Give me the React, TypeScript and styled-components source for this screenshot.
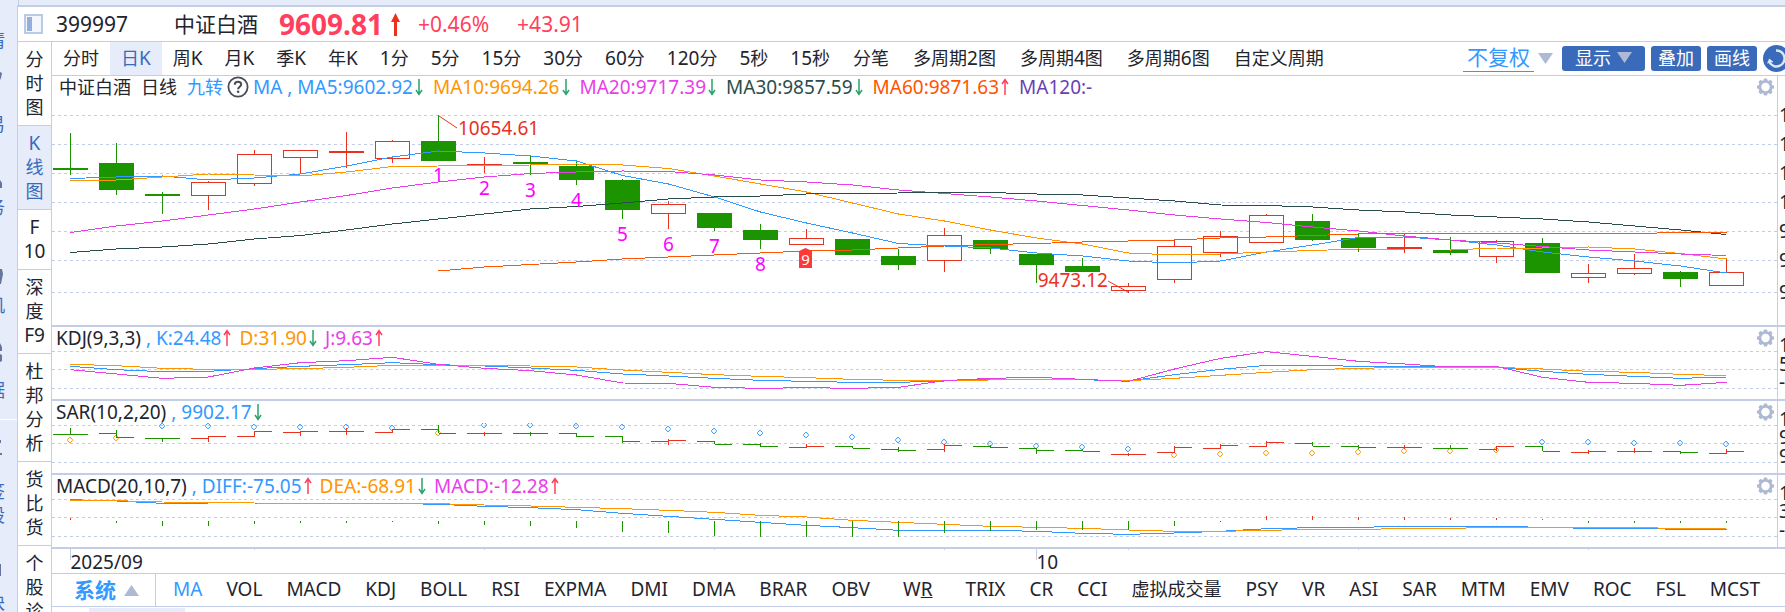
import React, { useState } from "react";
import styled, { createGlobalStyle } from "styled-components";

const c = {
  line: "#c3cde6",
  pale: "#e6ecfa",
  ink: "#22242e",
  navy: "#3a6bbb",
  blue: "#3399ff",
  orange: "#ff9500",
  magenta: "#e83ee8",
  slate: "#2a4d4d",
  vermilion: "#ff5500",
  violet: "#6a3fb0",
  red: "#e8321e",
  rose: "#ff3f5c",
  green: "#1c9400",
  fall: "#2aa36b",
  muted: "#aeb9d4",
};

const Global = createGlobalStyle`
  * { box-sizing: border-box; }
  html, body, #root { height: 100%; }
  body {
    margin: 0;
    overflow: hidden;
    background: ${c.pale};
    color: ${c.ink};
    font-family: "Noto Sans", "Noto Sans CJK SC", sans-serif;
    font-size: 19px;
  }
  button, select {
    margin: 0;
    padding: 0;
    border: 0;
    background: none;
    color: inherit;
    font: inherit;
    cursor: pointer;
  }
  svg { display: block; }
`;

/* ---------- page frame ---------- */

const Page = styled.div`
  display: flex;
  height: 100%;
`;

const Rail = styled.nav`
  flex: none;
  width: 17px;
  padding-top: 28px;
  overflow: hidden;
  color: ${c.navy};
`;

const RailItem = styled.div<{ $divided?: boolean }>`
  display: flex;
  flex-direction: column;
  align-items: flex-end;
  padding-right: 12px;
  background: ${(p) =>
    p.$divided ? "linear-gradient(#fff, #fff) 0 17px / 17px 1px no-repeat" : "none"};
`;

const RailLabel = styled.span`
  font-size: 18px;
  line-height: 24px;
  white-space: nowrap;
`;

const Shell = styled.div`
  flex: 1;
  min-width: 0;
  display: flex;
  flex-direction: column;
`;

const TopStrip = styled.div`
  flex: none;
  height: 5px;
  margin-left: 1px;
  border-left: 1px solid ${c.line};
`;

const Window = styled.main`
  flex: 1;
  min-height: 0;
  display: flex;
  flex-direction: column;
  background: #fff;
  border-top: 2px solid ${c.line};
  border-left: 1px solid ${c.line};
`;

const Quote = styled.header`
  flex: none;
  display: flex;
  align-items: center;
  height: 35px;
  padding-left: 6px;
  border-bottom: 1px solid ${c.line};
  font-size: 21px;
  line-height: 34px;
  white-space: nowrap;
`;

const Code = styled.span`
  width: 118px;
  margin-left: 13px;
`;

const Price = styled.strong`
  margin: 0 8px 0 21px;
  color: ${c.rose};
  font-size: 28px;
`;

const Change = styled.span`
  margin-left: 18px;
  color: ${c.rose};
  & + & { margin-left: 28px; }
`;

const Columns = styled.div`
  flex: 1;
  min-height: 0;
  display: flex;
`;

const Side = styled.nav`
  flex: none;
  width: 34px;
  overflow: hidden;
  border-right: 1px solid ${c.line};
`;

const SideTab = styled.button<{ $on?: boolean }>`
  display: flex;
  flex-direction: column;
  align-items: center;
  width: 100%;
  padding: 5px 0 6px;
  border-bottom: 1px solid ${c.line};
  background: ${(p) => (p.$on ? c.pale : "#fff")};
  color: ${(p) => (p.$on ? c.navy : c.ink)};
  line-height: 24px;
`;

const Content = styled.div`
  flex: 1;
  min-width: 0;
  display: flex;
  flex-direction: column;
`;

/* ---------- period toolbar ---------- */

const Toolbar = styled.div`
  flex: none;
  display: flex;
  align-items: center;
  height: 34px;
  border-bottom: 1px solid ${c.line};
  overflow: hidden;
`;

const Periods = styled.div`
  flex: 1;
  min-width: 0;
  display: flex;
  align-self: stretch;
  overflow: hidden;
`;

const Period = styled.button<{ $on?: boolean; $wide?: boolean }>`
  flex: none;
  padding: 0 ${(p) => (p.$wide ? 12 : 11)}px 2px;
  background: ${(p) => (p.$on ? c.pale : "none")};
  color: ${(p) => (p.$on ? c.navy : c.ink)};
  line-height: 30px;
  white-space: nowrap;
`;

const Actions = styled.div`
  flex: none;
  display: flex;
  align-items: center;
  gap: 6px;
  margin-right: -5px;
`;

const Adjust = styled.label`
  display: flex;
  align-items: center;
  gap: 4px;
  margin-right: 3px;
`;

const AdjustSelect = styled.select`
  width: 71px;
  height: 26px;
  padding: 0 4px 2px;
  appearance: none;
  border-bottom: 1px solid ${c.blue};
  color: ${c.blue};
  font-size: 21px;
  line-height: 22px;
`;

const Action = styled.button`
  display: flex;
  align-items: center;
  justify-content: center;
  gap: 6px;
  height: 25px;
  padding: 0 7px 2px;
  border-radius: 3px;
  background: ${c.navy};
  color: #fff;
  font-size: 18px;
  line-height: 22px;
`;

const MenuAction = styled(Action)`
  padding: 0 13px 2px;
`;

const RoundAction = styled(Action)`
  width: 27px;
  height: 27px;
  padding: 0;
  border-radius: 50%;
`;

/* ---------- chart panels ---------- */

const Panel = styled.section`
  flex: none;
  display: flex;
  border-bottom: 2px solid ${c.line};
`;

const Plot = styled.div`
  flex: 1;
  min-width: 0;
`;

const Head = styled.div<{ $indent?: boolean }>`
  display: flex;
  align-items: center;
  height: 22px;
  padding: 0 3px 0 ${(p) => (p.$indent ? 7 : 4)}px;
  line-height: 22px;
  white-space: nowrap;
`;

const Legend = styled.div<{ $tight?: boolean }>`
  flex: 1;
  min-width: 0;
  display: flex;
  gap: ${(p) => (p.$tight ? 8 : 10)}px;
  overflow: hidden;
`;

const Title = styled.span`
  display: flex;
  align-items: center;
  gap: 4px;
`;

const Reading = styled.span<{ $tone: string }>`
  display: flex;
  align-items: center;
  gap: 2px;
  color: ${(p) => p.$tone};
  white-space: pre;
`;

const Lead = styled.span`
  color: ${c.ink};
`;

const Gear = styled.button`
  flex: none;
  width: 17px;
  height: 18px;
`;

const Help = styled.button`
  color: ${c.ink};
`;

const Axis = styled.div`
  flex: none;
  width: 8px;
  overflow: hidden;
  border-left: 1px solid ${c.line};
`;

const Timeline = styled.div`
  flex: none;
  height: 25px;
  border-bottom: 1px solid ${c.line};
`;

/* ---------- indicator bar ---------- */

const IndicatorBar = styled.div`
  flex: none;
  display: flex;
  height: 33px;
  border-bottom: 1px solid ${c.line};
  overflow: hidden;
`;

const System = styled.button`
  flex: none;
  display: flex;
  align-items: center;
  gap: 8px;
  width: 104px;
  padding-left: 22px;
  border-right: 1px solid ${c.line};
  color: ${c.blue};
  font-size: 21px;
  font-weight: 700;
  line-height: 30px;
`;

const Indicators = styled.div`
  display: flex;
  gap: 24px;
  padding-left: 17px;
`;

const Indicator = styled.button<{ $on?: boolean; $roomy?: boolean }>`
  flex: none;
  padding: 0 ${(p) => (p.$roomy ? 9 : 0)}px 2px;
  color: ${(p) => (p.$on ? c.blue : c.ink)};
  line-height: 30px;
`;

const Footer = styled.div`
  flex: 1;
  padding: 1px 0 0 37px;
`;

const FooterTab = styled.div`
  width: 96px;
  height: 100%;
  background: ${c.pale};
`;

const HanRun = styled.span`
  font-size: 18px;
`;

/** Sets Chinese characters one size below the Latin text around them. */
const Mixed = ({ text }: { text: string }) => (
  <>
    {text
      .split(/([\u4e00-\u9fff]+)/)
      .filter(Boolean)
      .map((part, i) => (/[\u4e00-\u9fff]/.test(part) ? <HanRun key={i}>{part}</HanRun> : part))}
  </>
);

/* ---------- icons ---------- */

const Triangle = ({ up }: { up?: boolean }) => (
  <svg width="15" height="11" viewBox="0 0 15 11" aria-hidden="true">
    <path d={up ? "M0 11L7.5 0L15 11Z" : "M0 0L7.5 11L15 0Z"} fill={c.muted} />
  </svg>
);

const Trend = ({ up }: { up?: boolean }) => (
  <svg width="8" height="18" viewBox="0 0 8 18" aria-hidden="true">
    <path
      d={up ? "M4 17V2M1 6L4 1.5L7 6" : "M4 1V16M1 12L4 16.5L7 12"}
      fill="none"
      stroke={up ? c.rose : c.fall}
      strokeWidth="1.5"
    />
  </svg>
);

const PanelIcon = () => (
  <svg width="19" height="20" viewBox="0 0 19 20" aria-hidden="true">
    <rect x="1" y="1" width="17" height="18" fill="#f3f6fc" stroke="#a3bbdf" strokeWidth="1.5" />
    <rect x="3" y="3" width="5" height="14" fill="#94aed8" />
  </svg>
);

const PriceArrow = () => (
  <svg width="9" height="23" viewBox="0 0 9 23" aria-hidden="true">
    <path d="M4.5 0L9 9H6V23H3V9H0Z" fill={c.red} />
  </svg>
);

const GearIcon = () => (
  <svg width="17" height="18" viewBox="-8.5 -9 17 18" aria-hidden="true">
    <circle r="5.6" fill="none" stroke={c.muted} strokeWidth="2.8" />
    {[0, 45, 90, 135, 180, 225, 270, 315].map((a) => (
      <rect key={a} x="-1.8" y="-8.6" width="3.6" height="3" rx="1" fill={c.muted} transform={`rotate(${a})`} />
    ))}
  </svg>
);

const HelpIcon = () => (
  <svg width="22" height="22" viewBox="0 0 22 22" aria-hidden="true">
    <circle cx="11" cy="11" r="9.6" fill="none" stroke="#4a4d58" strokeWidth="1.8" />
    <path
      d="M7.8 8.8C7.8 6.8 9.2 5.8 11 5.8C12.9 5.8 14.2 6.9 14.2 8.5C14.2 10.6 11.1 10.8 11.1 13.2"
      fill="none"
      stroke="#4a4d58"
      strokeWidth="2"
    />
    <circle cx="11.1" cy="15.8" r="1.3" fill="#4a4d58" />
  </svg>
);

const RefreshIcon = () => (
  <svg width="27" height="27" viewBox="0 0 27 27" aria-hidden="true">
    <path d="M13 5.5A8 8 0 1 1 6.6 17.5" fill="none" stroke="#dfe7f6" strokeWidth="2.4" />
    <path d="M4 18.5L6.2 13.5L10.5 17Z" fill="#dfe7f6" />
  </svg>
);

/* ---------- price data ---------- */

const STEP = 46;
const cx = (i: number) => 18.5 + STEP * i;

type Candle = [up: 0 | 1, high: number, top: number, bottom: number, low: number];

const candles: Candle[] = [
  [0, 133, 168, 170, 175], [0, 143, 163, 190, 195], [0, 192, 194, 196, 214], [1, 181, 182, 196, 210],
  [1, 150, 154, 184, 186], [1, 150, 150, 158, 174], [1, 132, 151, 153, 168], [1, 140, 141, 159, 163],
  [0, 115, 141, 161, 161], [1, 157, 164, 165, 173], [0, 156, 162, 164, 175], [0, 162, 166, 180, 185],
  [0, 179, 180, 210, 219], [1, 201, 204, 214, 229], [0, 213, 213, 228, 231], [0, 224, 230, 240, 249],
  [1, 229, 238, 245, 245], [0, 239, 239, 255, 255], [0, 249, 256, 265, 270], [1, 228, 235, 261, 272],
  [0, 240, 240, 249, 254], [0, 254, 254, 265, 283], [0, 258, 266, 272, 272], [1, 283, 286, 291, 293],
  [1, 240, 246, 280, 283], [1, 231, 236, 253, 257], [1, 214, 215, 243, 243], [0, 214, 221, 240, 241],
  [0, 233, 238, 248, 252], [1, 234, 247, 249, 253], [0, 237, 250, 253, 255], [1, 240, 241, 257, 263],
  [0, 238, 243, 273, 273], [1, 264, 273, 278, 283], [1, 254, 268, 274, 275], [0, 271, 272, 279, 287],
  [1, 258, 272, 286, 286],
];

const averages: { tone: string; from: number; ys: number[] }[] = [
  { tone: c.blue, from: 0, ys: [178.5, 177, 176, 180, 178, 174, 166, 157, 151, 153, 156, 161, 175.5, 184, 197, 212, 223, 233, 243.5, 246, 248, 253, 256, 261, 263, 261, 252, 245, 237.5, 237, 240, 245, 252, 257, 261, 266, 273] },
  { tone: c.orange, from: 0, ys: [181, 180, 177, 174, 175, 176, 172, 166.5, 166, 165.5, 165, 164, 165, 168.5, 176, 184, 192, 203, 214, 221, 230, 238, 244, 253, 255, 254, 252, 250.5, 249, 250, 250, 248, 248, 247, 249, 253.5, 259] },
  { tone: c.magenta, from: 0, ys: [232.5, 226, 221, 215, 209, 202, 195.5, 188, 182, 177, 173.5, 172, 171, 171.5, 175, 180, 182, 185, 190, 193.5, 197, 201, 205.5, 210, 215, 219, 222.5, 227, 231, 236, 240, 243, 246.5, 250, 252, 254, 255.5] },
  { tone: c.slate, from: 0, ys: [252.5, 249, 247, 244, 239, 235.5, 230, 224, 219, 214, 209, 206.5, 203, 199, 197, 196, 194, 193.5, 193, 192.5, 192.5, 194, 195, 198, 201, 205, 205.5, 207, 210, 212, 215, 217, 219, 222, 226, 230, 234.5] },
  { tone: c.vermilion, from: 8, ys: [271, 267, 264.5, 262, 259, 257, 255, 253, 251, 250, 248, 246, 244.5, 243.5, 242, 241, 240, 238, 237, 235.5, 234, 233.5, 233.5, 233.5, 233.5, 233.5, 233.5, 232.5, 232.5] },
];

const nineTurns = [182, 195, 197, 207, 241, 251, 253, 271];

const PRICE_TOP = 98;
const priceY = (v: number) => v - PRICE_TOP;

/* Lower panels are plotted at three units to the pixel. */
const unit = (base: number) => (v: number) => v / 3 - base;

const kdj = {
  k: [139, 149, 155, 154, 146, 139, 134, 128, 134, 138, 144, 151, 162, 168, 175, 181, 184, 187, 187, 183, 178, 177, 179, 183, 164, 148, 136, 136, 139, 139, 141, 142, 154, 163, 169, 175, 171],
  d: [133, 137, 145, 148, 148, 146, 142, 136, 136, 137, 138, 141, 150, 157, 164, 169, 173, 178, 181, 181, 180, 179, 179, 182, 175, 166, 157, 149, 145, 142, 142, 142, 147, 154, 157, 163, 167],
  j: [149, 162, 175, 171, 144, 128, 122, 112, 133, 145, 152, 165, 189, 190, 202, 205, 203, 205, 202, 182, 175, 172, 178, 184, 147, 115, 95, 109, 124, 132, 141, 139, 172, 187, 190, 196, 187],
};

type Bar = [up: 0 | 1, high: number, low: number, open: number, close: number, sar: number, below: 0 | 1];

const sar: Bar[] = [
  [0, 324, 345, 343, 343, 360, 1], [0, 330, 353, 340, 352, 354, 1], [0, 355, 365, 355, 355, 318, 0],
  [1, 348, 365, 355, 349, 318, 0], [1, 333, 352, 349, 334, 321, 0], [1, 333, 347, 337, 334, 321, 0],
  [1, 325, 344, 334, 334, 321, 0], [1, 327, 340, 337, 328, 324, 0], [0, 315, 340, 328, 340, 339, 1],
  [1, 336, 347, 340, 340, 315, 0], [0, 336, 347, 340, 340, 315, 0], [0, 340, 352, 340, 349, 318, 0],
  [0, 349, 368, 349, 364, 321, 0], [1, 357, 374, 364, 361, 327, 0], [0, 364, 373, 364, 373, 333, 0],
  [0, 370, 382, 373, 379, 339, 0], [1, 373, 382, 382, 379, 345, 0], [0, 379, 385, 379, 385, 351, 0],
  [0, 382, 396, 388, 391, 360, 0], [1, 373, 395, 388, 376, 366, 0], [0, 376, 385, 379, 382, 371, 0],
  [0, 385, 402, 385, 391, 378, 0], [0, 388, 394, 391, 394, 381, 0], [1, 399, 408, 403, 403, 387, 0],
  [1, 379, 399, 397, 382, 405, 1], [1, 372, 388, 385, 376, 402, 1], [1, 363, 379, 379, 367, 399, 1],
  [0, 367, 379, 370, 379, 399, 1], [0, 375, 388, 379, 382, 396, 1], [1, 375, 388, 382, 382, 393, 1],
  [0, 376, 387, 385, 385, 393, 1], [1, 378, 392, 388, 379, 390, 1], [0, 379, 394, 379, 394, 366, 0],
  [1, 391, 402, 397, 394, 366, 0], [1, 385, 399, 394, 394, 369, 0], [0, 394, 403, 394, 397, 369, 0],
  [1, 388, 400, 400, 394, 372, 0],
];

const macd = {
  diff: [539, 543, 550, 552, 552, 550, 550, 550, 553, 559, 563, 569, 580, 589, 598, 607, 616, 623, 631, 631, 631, 634, 640, 643, 639, 634, 626, 623, 622, 619, 619, 619, 622, 625, 625, 628, 628],
  dea: [541, 542, 546, 548, 549, 550, 550, 550, 551, 555, 558, 562, 566, 571, 577, 586, 591, 601, 607, 613, 619, 622, 625, 630, 634, 634, 631, 628, 628, 626, 625, 622, 622, 622, 623, 625, 626],
  bars: [595, 609, 618, 617, 612, 609, 608, 606, 612, 615, 617, 624, 636, 639, 648, 651, 651, 651, 651, 639, 633, 630, 630, 630, 618, 606, 588, 588, 591, 592, 594, 595, 597, 609, 609, 609, 609],
};

/* ---------- drawing parts ---------- */

const Grid = ({ ys }: { ys: number[] }) => (
  <g stroke={c.line} strokeDasharray="3 3" shapeRendering="crispEdges">
    {ys.map((y) => (
      <line key={y} x1="0" x2="100%" y1={y + 0.5} y2={y + 0.5} />
    ))}
  </g>
);

const Series = ({ ys, tone, from = 0 }: { ys: number[]; tone: string; from?: number }) => (
  <polyline
    points={ys.map((y, i) => `${cx(i + from)},${y}`).join(" ")}
    fill="none"
    stroke={tone}
    shapeRendering="crispEdges"
  />
);

const CandleMark = ({ x, data }: { x: number; data: Candle }) => {
  const [up, high, top, bottom, low] = data;
  const tone = up ? c.red : c.green;
  const hollow = up && bottom - top > 2;
  return (
    <g stroke={tone} shapeRendering="crispEdges">
      {high < top && <line x1={x} x2={x} y1={priceY(high)} y2={priceY(top)} />}
      {low > bottom && <line x1={x} x2={x} y1={priceY(bottom)} y2={priceY(low)} />}
      {hollow ? (
        <rect x={x - 17} y={priceY(top) + 0.5} width="34" height={bottom - top - 1} fill="#fff" />
      ) : (
        <rect x={x - 17.5} y={priceY(top)} width="35" height={bottom - top} fill={tone} stroke="none" />
      )}
    </g>
  );
};

const AxisLabels = ({ height, marks }: { height: number; marks: [string, number][] }) => (
  <svg width="14" height={height} fill={c.ink} fontSize="19">
    {marks.map(([t, y]) => (
      <text key={y} x="1" y={y}>
        {t}
      </text>
    ))}
  </svg>
);

const PriceChart = () => (
  <svg width="100%" height="227" role="img" aria-label="中证白酒 日线">
    <Grid ys={[17, 46, 75, 104, 133, 162, 194]} />
    {candles.map((d, i) => (
      <CandleMark key={i} x={cx(i)} data={d} />
    ))}
    {averages.map((a) => (
      <Series key={a.tone} tone={a.tone} from={a.from} ys={a.ys.map(priceY)} />
    ))}
    <g stroke={c.red}>
      <line x1="387" y1="18" x2="405" y2="30" />
      <line x1="1056" y1="183" x2="1076" y2="194" />
    </g>
    <g fill={c.red} fontSize="19">
      <text x="406" y="37">10654.61</text>
      <text x="1056" y="189" textAnchor="end">9473.12</text>
    </g>
    <g fill="#ff00ff" fontSize="19" textAnchor="middle">
      {nineTurns.map((y, i) => (
        <text key={i} x={cx(8 + i)} y={priceY(y)}>
          {i + 1}
        </text>
      ))}
    </g>
    <path d="M747 170V153L753.5 150L760 153V170Z" fill="#ff3838" />
    <text x="753.5" y="167" fill="#fff" fontSize="15" textAnchor="middle">
      9
    </text>
  </svg>
);

const kdjY = unit(29);
const sarY = unit(103);
const macdY = unit(177);

const KdjChart = () => (
  <svg width="100%" height="50" role="img" aria-label="KDJ">
    <Grid ys={[2, 20, 39]} />
    <Series tone={c.blue} ys={kdj.k.map(kdjY)} />
    <Series tone={c.orange} ys={kdj.d.map(kdjY)} />
    <Series tone={c.magenta} ys={kdj.j.map(kdjY)} />
  </svg>
);

const SarChart = () => (
  <svg width="100%" height="50" role="img" aria-label="SAR">
    <Grid ys={[2, 20, 39]} />
    {sar.map(([up, high, low, open, close, dot, below], i) => {
      const x = cx(i);
      return (
        <g key={i} fill="none">
          <path
            d={`M${x - 0.5} ${sarY(dot) - 2.8}l2.4 2.2v1.2l-2.4 2.2l-2.4 -2.2v-1.2Z`}
            stroke={below ? c.orange : c.blue}
          />
          <path
            d={`M${x} ${sarY(high)}V${sarY(low)}M${x - 17.5} ${sarY(open)}H${x}M${x} ${sarY(close)}H${x + 17.5}`}
            stroke={up ? c.red : c.green}
            shapeRendering="crispEdges"
          />
        </g>
      );
    })}
  </svg>
);

const MacdChart = () => (
  <svg width="100%" height="50" role="img" aria-label="MACD">
    <Grid ys={[2, 20, 39]} />
    <Series tone={c.blue} ys={macd.diff.map(macdY)} />
    <Series tone={c.orange} ys={macd.dea.map(macdY)} />
    <g shapeRendering="crispEdges">
      {macd.bars.map((v, i) => {
        const up = v < 601;
        return (
          <line
            key={i}
            x1={cx(i)}
            x2={cx(i)}
            y1={up ? macdY(v) : 24}
            y2={up ? 23 : macdY(v)}
            stroke={up ? c.red : c.green}
          />
        );
      })}
    </g>
  </svg>
);

const SettingsButton = ({ name }: { name: string }) => (
  <Gear type="button" aria-label={`${name} 设置`}>
    <GearIcon />
  </Gear>
);

type ReadingData = { text: string; tone: string; up?: boolean; flat?: boolean };

const Readings = ({ items, lead }: { items: ReadingData[]; lead?: string }) => (
  <>
    {items.map((r, i) => (
      <Reading key={r.text} $tone={r.tone}>
        <span>
          {i === 0 && lead && (
            <>
              <Lead>{lead}</Lead>
              {" , "}
            </>
          )}
          {r.text}
        </span>
        {!r.flat && <Trend up={r.up} />}
      </Reading>
    ))}
  </>
);

const maReadings: ReadingData[] = [
  { text: "MA , MA5:9602.92", tone: c.blue },
  { text: "MA10:9694.26", tone: c.orange },
  { text: "MA20:9717.39", tone: c.magenta },
  { text: "MA30:9857.59", tone: c.slate },
  { text: "MA60:9871.63", tone: c.vermilion, up: true },
  { text: "MA120:-", tone: c.violet, flat: true },
];

const lowerPanels: {
  lead: string;
  readings: ReadingData[];
  chart: () => React.ReactElement;
  marks: [string, number][];
}[] = [
  {
    lead: "KDJ(9,3,3)",
    readings: [
      { text: "K:24.48", tone: c.blue, up: true },
      { text: "D:31.90", tone: c.orange },
      { text: "J:9.63", tone: c.magenta, up: true },
    ],
    chart: KdjChart,
    marks: [["1", 25], ["5", 44], ["-", 62]],
  },
  {
    lead: "SAR(10,2,20)",
    readings: [{ text: "9902.17", tone: c.blue }],
    chart: SarChart,
    marks: [["1", 25], ["9", 43], ["9", 62]],
  },
  {
    lead: "MACD(20,10,7)",
    readings: [
      { text: "DIFF:-75.05", tone: c.blue, up: true },
      { text: "DEA:-68.91", tone: c.orange },
      { text: "MACD:-12.28", tone: c.magenta, up: true },
    ],
    chart: MacdChart,
    marks: [["1", 25], ["3", 43], ["-", 62]],
  },
];

const sideTabs = [["分", "时", "图"], ["K", "线", "图"], ["F", "10"], ["深", "度", "F9"], ["杜", "邦", "分", "析"], ["货", "比", "货"], ["个", "股", "诊"]];

const periods = ["分时", "日K", "周K", "月K", "季K", "年K", "1分", "5分", "15分", "30分", "60分", "120分", "5秒", "15秒", "分笔", "多周期2图", "多周期4图", "多周期6图", "自定义周期"];

const indicators = ["MA", "VOL", "MACD", "KDJ", "BOLL", "RSI", "EXPMA", "DMI", "DMA", "BRAR", "OBV", "WR", "TRIX", "CR", "CCI", "虚拟成交量", "PSY", "VR", "ASI", "SAR", "MTM", "EMV", "ROC", "FSL", "MCST"];

const railItems: { icon: number; shape: string; labels: string[]; divided?: boolean }[] = [
  { icon: 0, shape: "", labels: ["情"] },
  { icon: 60, shape: "M0 20L2 21L1 26L0 28Z", labels: ["易"] },
  { icon: 59, shape: "M0 44L2 47V52H0Z", labels: ["务"] },
  { icon: 74, shape: "M0 50H2L3 55L1 65H0Z", labels: ["机"] },
  { icon: 61, shape: "M0 26L2 30V34H0ZM0 37L2 38V44L0 45Z", labels: ["据"] },
  { icon: 77, shape: "M0 38H1V41H0ZM0 51H2V53H0Z", labels: ["签", "股"], divided: true },
  { icon: 63, shape: "M0 37H1V49H0Z", labels: ["块"] },
];

export default function App() {
  const [period, setPeriod] = useState("日K");
  const [indicator, setIndicator] = useState("MA");
  const [side, setSide] = useState(1);

  return (
    <>
      <Global />
      <Page>
        <Rail>
          {railItems.map((item) => (
            <RailItem key={item.labels[0]} $divided={item.divided}>
              {item.icon > 0 && (
                <svg width="5" height={item.icon} aria-hidden="true">
                  <path d={item.shape} fill="#66759b" />
                </svg>
              )}
              {item.labels.map((l) => (
                <RailLabel key={l}>{l}</RailLabel>
              ))}
            </RailItem>
          ))}
        </Rail>
        <Shell>
          <TopStrip />
          <Window>
            <Quote>
              <PanelIcon />
              <Code>399997</Code>
              <span>中证白酒</span>
              <Price>9609.81</Price>
              <PriceArrow />
              <Change>+0.46%</Change>
              <Change>+43.91</Change>
            </Quote>
            <Columns>
              <Side>
                {sideTabs.map((chars, i) => (
                  <SideTab key={i} type="button" $on={i === side} onClick={() => setSide(i)}>
                    {chars.map((ch, j) => (
                      <span key={j}>
                        <Mixed text={ch} />
                      </span>
                    ))}
                  </SideTab>
                ))}
              </Side>
              <Content>
                <Toolbar>
                  <Periods>
                    {periods.map((p, i) => (
                      <Period key={p} type="button" $on={p === period} $wide={i > 13} onClick={() => setPeriod(p)}>
                        <Mixed text={p} />
                      </Period>
                    ))}
                  </Periods>
                  <Actions>
                    <Adjust>
                      <AdjustSelect aria-label="复权" defaultValue="不复权">
                        <option>不复权</option>
                      </AdjustSelect>
                      <Triangle />
                    </Adjust>
                    <MenuAction type="button">
                      显示
                      <Triangle />
                    </MenuAction>
                    <Action type="button">叠加</Action>
                    <Action type="button">画线</Action>
                    <RoundAction type="button" aria-label="刷新">
                      <RefreshIcon />
                    </RoundAction>
                  </Actions>
                </Toolbar>

                <Panel>
                  <Plot>
                    <Head $indent>
                      <Legend>
                        <HanRun>中证白酒</HanRun>
                        <HanRun>日线</HanRun>
                        <Title>
                          <Reading $tone={c.blue}>
                            <HanRun>九转</HanRun>
                          </Reading>
                          <Help type="button" aria-label="帮助">
                            <HelpIcon />
                          </Help>
                          <Readings items={maReadings.slice(0, 1)} />
                        </Title>
                        <Readings items={maReadings.slice(1)} />
                      </Legend>
                      <SettingsButton name="MA" />
                    </Head>
                    <PriceChart />
                  </Plot>
                  <Axis>
                    <AxisLabels
                      height={249}
                      marks={[["1", 46], ["1", 75], ["1", 104], ["1", 133], ["9", 162], ["9", 191], ["9", 223]]}
                    />
                  </Axis>
                </Panel>

                {lowerPanels.map((p) => (
                  <Panel key={p.lead}>
                    <Plot>
                      <Head>
                        <Legend $tight>
                          <Readings items={p.readings} lead={p.lead} />
                        </Legend>
                        <SettingsButton name={p.lead} />
                      </Head>
                      <p.chart />
                    </Plot>
                    <Axis>
                      <AxisLabels height={72} marks={p.marks} />
                    </Axis>
                  </Panel>
                ))}

                <Timeline>
                  <svg width="100%" height="24" fontSize="19" fill={c.ink} role="img" aria-label="日期">
                    <g stroke={c.line} shapeRendering="crispEdges">
                      {[0, 21].map((i) => (
                        <line key={i} x1={cx(i)} x2={cx(i)} y1="0" y2="11" />
                      ))}
                      {[4, 9, 14, 19, 23, 28, 33].map((i) => (
                        <line key={i} x1={cx(i)} x2={cx(i)} y1="0" y2="1" />
                      ))}
                    </g>
                    <text x={cx(0)} y="20">2025/09</text>
                    <text x={cx(21)} y="20">10</text>
                  </svg>
                </Timeline>

                <IndicatorBar>
                  <System type="button">
                    系统
                    <Triangle up />
                  </System>
                  <Indicators>
                    {indicators.map((name) => (
                      <Indicator
                        key={name}
                        type="button"
                        $on={name === indicator}
                        $roomy={name === "WR"}
                        onClick={() => setIndicator(name)}
                      >
                        {name === "WR" ? (
                          <>
                            W<u>R</u>
                          </>
                        ) : (
                          <Mixed text={name} />
                        )}
                      </Indicator>
                    ))}
                  </Indicators>
                </IndicatorBar>
                <Footer>
                  <FooterTab />
                </Footer>
              </Content>
            </Columns>
          </Window>
        </Shell>
      </Page>
    </>
  );
}
